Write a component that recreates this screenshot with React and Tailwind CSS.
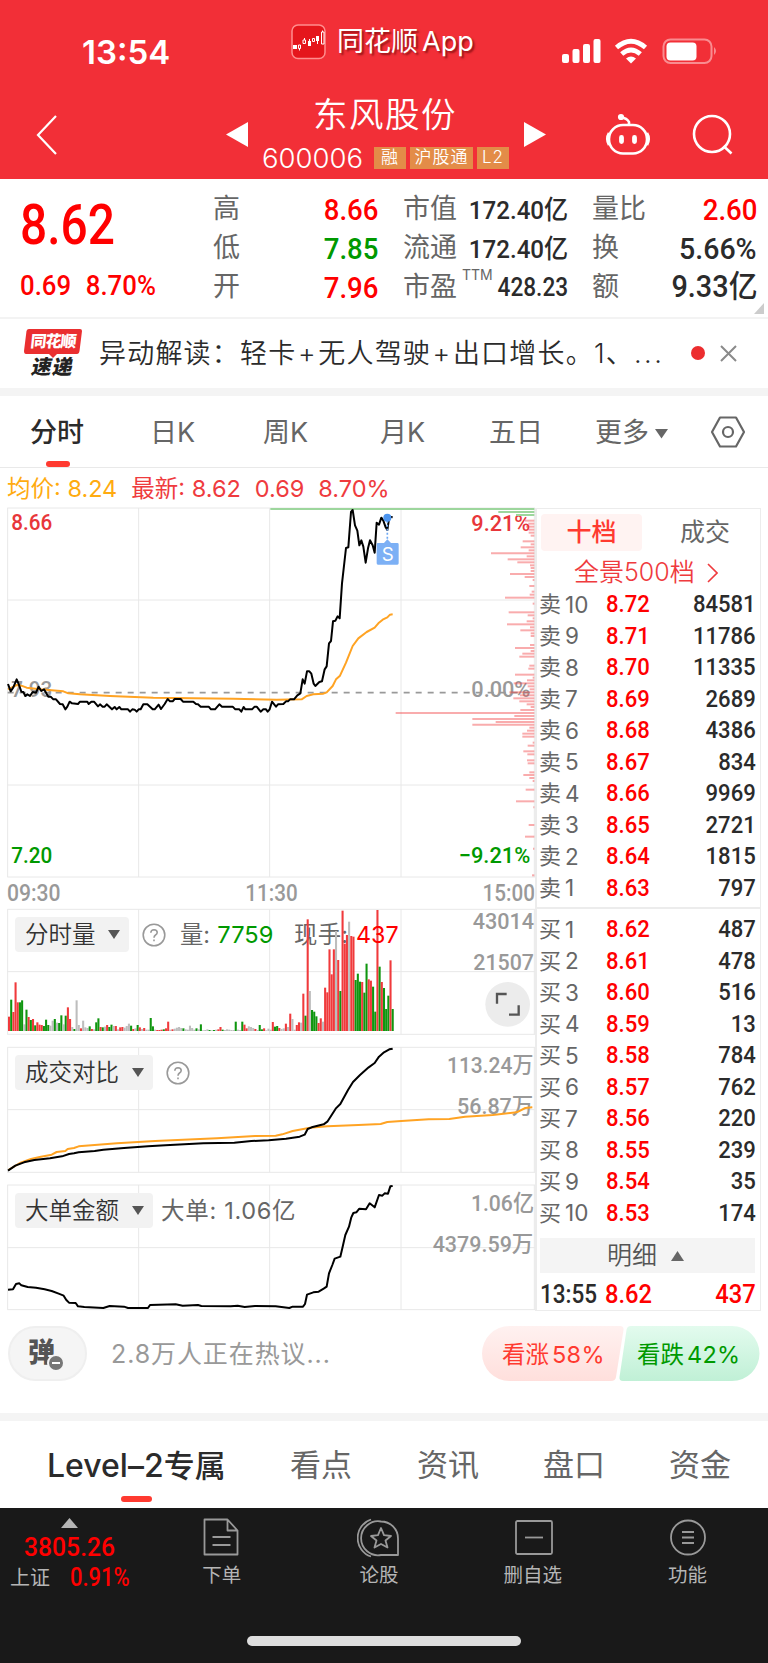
const PRICE =
  "24,552 32,574 40,562 50,538 56,552 64,575 70,576 76,588 82,583 90,588 98,576 108,578 116,560 124,573 132,568 145,590 152,590 160,598 168,598 180,612 188,613 196,628 202,620 209,605 216,610 234,612 240,605 262,605 266,612 274,605 282,605 294,619 300,613 308,620 314,620 320,613 336,628 344,621 350,628 358,621 364,628 384,628 390,635 397,628 404,629 410,635 416,628 422,628 430,613 442,613 458,628 464,628 476,614 483,627 494,612 503,597 510,604 518,604 524,597 542,597 549,605 580,605 588,612 594,613 602,620 626,620 633,628 645,628 658,613 666,620 698,620 706,628 718,628 724,635 731,621 736,628 756,628 764,620 770,620 782,635 790,628 798,628 803,635 809,628 816,605 828,620 834,613 850,612 858,604 864,604 870,598 882,598 892,586 901,580 908,538 914,551 921,514 928,514 934,521 941,551 946,558 958,546 966,544 974,508 980,499 987,430 993,423 999,364 1006,362 1013,349 1019,355 1026,250 1038,144 1045,142 1053,36 1058,30 1065,76 1072,92 1078,136 1084,121 1090,140 1097,188 1104,145 1110,121 1118,136 1124,158 1130,68 1137,74 1144,53 1150,62 1157,82 1162,90 1168,50 1178,52";

const AVERAGE =
  "24,568 36,562 50,555 64,557 80,563 120,568 190,574 205,580 240,583 330,588 460,593 700,596 830,599 905,598 920,588 940,583 970,581 980,577 998,558 1008,538 1020,527 1038,488 1058,438 1075,415 1100,396 1124,383 1135,370 1148,359 1162,352 1170,344 1178,343";

// [y, bar length], bars grow leftwards from the right edge
const PROFILE = [
  [62, 28], [71, 18], [80, 25], [89, 17], [98, 17], [107, 11], [124, 35], [133, 11], [142, 41], [151, 17],
  [160, 130], [169, 23], [178, 80], [187, 51], [196, 13], [204, 11], [213, 11], [222, 73], [231, 29], [240, 5],
  [258, 15], [275, 8], [284, 14], [293, 88], [311, 5], [337, 77], [346, 20], [355, 5], [364, 23], [373, 82],
  [382, 13], [391, 42], [400, 11], [408, 11], [435, 13], [444, 58], [453, 11], [461, 36], [470, 45], [497, 15],
  [506, 18], [524, 58], [533, 5], [541, 22], [550, 62], [559, 20], [568, 14], [577, 75], [586, 43], [595, 63],
  [604, 45], [613, 23], [621, 11], [630, 42], [639, 416], [648, 60], [657, 186], [666, 116], [674, 186],
  [683, 15], [692, 22], [701, 36], [710, 36], [728, 5], [737, 20], [754, 33], [763, 21], [781, 22], [790, 20],
  [817, 15], [825, 33], [834, 15], [843, 5], [869, 26], [904, 55], [922, 3], [975, 17], [1010, 28], [1046, 4], [1126, 7],
];

const VOLUME =
  "r43 g94 r57 r146 r86 g86 g92 s20 g64 r42 g33 r36 g17 r26 r19 r18 g15 g34 g18 s16 s31 g36 s25 g24 g47 s20 g46 r71 r36 s12 g6 s92 s18 r8 s31 s11 s9 g14 r6 s5 g26 g38 r12 g11 s13 r18 g12 g19 s15 r15 s5 r11 r12 s10 s15 s22 g16 r6 s8 g18 r11 s6 r9 s4 s4 g39 g14 s4 r3 r3 r4 g5 r8 r28 s4 r5 s7 s10 s12 s9 g8 s5 s4 s16 s9 s4 g8 s5 g20 s2 s3 s5 g3 s2 g3 s4 r5 r12 g4 s3 s5 s4 s3 s3 g28 s4 s3 g28 r19 r8 s14 s12 s9 r6 s3 g18 g5 r8 s2 s7 s4 r27 g13 g15 r9 s6 s8 r22 s12 r52 s36 s4 r18 r26 s25 r112 g46 r335 s120 g63 g58 g44 r24 r38 s28 r130 r116 r245 r170 r245 s300 r213 g120 r361 r262 r288 s328 r285 r283 g153 g172 g148 r147 g115 g202 r155 r151 g133 g58 r363 g193 r147 g129 g66 g106 r212 g66".split(" ");

const TURNOVER_AVG =
  "25,420 62,398 93,387 119,381 155,374 170,366 196,363 203,357 222,354 236,349 351,340 465,333 651,325 765,318 827,317 847,313 878,303 930,293 982,289 1075,285 1142,282 1162,276 1204,273 1286,268 1348,267 1395,260 1478,255 1550,247 1576,234 1597,232";
const TURNOVER =
  "24,422 46,407 72,397 103,390 150,385 186,379 207,372 222,370 236,367 284,363 310,359 372,354 444,349 496,346 610,340 703,338 754,333 806,331 858,326 899,320 914,314 923,297 935,292 971,283 982,275 1007,236 1021,222 1044,180 1059,156 1080,135 1106,112 1124,99 1137,80 1152,67 1168,58 1178,56";
const BIG_ORDERS =
  "24,779 39,778 48,762 58,760 64,766 83,771 108,773 134,778 155,783 176,791 191,797 199,810 207,818 227,819 234,829 253,831 310,834 329,828 372,830 384,834 444,834 450,825 527,823 548,827 594,825 604,828 692,829 713,827 734,831 765,828 827,829 868,834 878,830 909,830 915,822 921,794 940,787 956,785 971,776 980,770 987,730 997,705 1004,686 1021,680 1028,650 1036,615 1047,590 1054,562 1060,549 1069,547 1078,536 1098,538 1109,520 1124,532 1137,495 1147,497 1154,490 1164,491 1171,469 1178,468";

const SELLS = [
  [10, "8.72", 84581], [9, "8.71", 11786], [8, "8.70", 11335], [7, "8.69", 2689], [6, "8.68", 4386],
  [5, "8.67", 834], [4, "8.66", 9969], [3, "8.65", 2721], [2, "8.64", 1815], [1, "8.63", 797],
];
const BUYS = [
  [1, "8.62", 487], [2, "8.61", 478], [3, "8.60", 516], [4, "8.59", 13], [5, "8.58", 784],
  [6, "8.57", 762], [7, "8.56", 220], [8, "8.55", 239], [9, "8.54", 35], [10, "8.53", 174],
];

const COLORS = { r: "#f03a3c", g: "#0f960f", s: "#bdbdbd" };
const din = "font-['Roboto','Noto_Sans_CJK_SC',sans-serif] font-medium";

function StatusBar() {
  return (
    <div className="flex h-[88px] items-start">
      <div className="ml-[82px] mt-[34px] w-[209px] text-[33px] font-semibold leading-9">13:54</div>
      <svg className="mt-6" width="35" height="36" viewBox="0 0 35 36" fill="none" stroke="#fff">
        <rect x="1" y="1" width="33" height="33.500" rx="6" fill="#e5161c" stroke="#ff8d8d" strokeWidth="1.500" />
        <path d="M2 21h4v4H2zM17 17h3v5h-3zM25 12h3v5h-3z" fill="#fff" stroke="none" />
        <path d="M7.500 21h2v3.500h-2zM12 16h2.500v3.500H12zM21.500 14.500h2v3h-2zM30.500 8h2.500v12h-2.500zM8.500 24.500v2M13.500 14v2M18.500 15v3M26.500 17v3M31.500 6.500v1.500" strokeWidth="1" />
      </svg>
      <div className="ml-[11px] mt-[24px] w-[225px] whitespace-nowrap text-[27px] leading-9 [text-shadow:2px_2px_2px_rgba(90,0,0,.6)]">
        同花顺<span className="ml-1">App</span>
      </div>
      <svg className="mt-[38px] shrink-0" width="160" height="28" viewBox="0 0 160 28" fill="#fff">
        <rect x="0" y="16" width="7" height="9" rx="2" />
        <rect x="10.500" y="11" width="7" height="14" rx="2" />
        <rect x="21" y="6" width="7" height="19" rx="2" />
        <rect x="31.500" y="1" width="7" height="24" rx="2" />
        <g fill="none" stroke="#fff" strokeWidth="4.800">
          <path d="M54.500 9.500Q69 -3 83.500 9.500" />
          <path d="M59.700 16Q69 8 78.300 16" />
        </g>
        <path d="M64 20.500Q69 16.500 74 20.500L69 25.500Z" />
        <rect x="101.500" y="1.500" width="48" height="23.500" rx="7" fill="none" stroke="#f98c90" strokeWidth="2" />
        <rect x="104.500" y="4.500" width="30" height="18" rx="4" />
        <path d="M152 9q4 4 0 8z" fill="#f98c90" />
      </svg>
    </div>
  );
}

function TitleBar() {
  const tag = "flex h-[22px] items-center justify-center bg-[#e38c48] text-[17px] font-[350] tracking-[1px]";
  return (
    <div className="flex h-[91px] items-start">
      <svg className="ml-9 mt-[27px]" width="22" height="41" fill="none" stroke="#fff" strokeWidth="2.200">
        <path d="M20 1L2 20L20 39" />
      </svg>
      <svg className="ml-[168px] mt-[34px]" width="23" height="26" fill="#fff">
        <path d="M0 12.500L22 0V25Z" />
      </svg>
      <div className="flex w-[276px] flex-col items-center">
        <div className="h-[58px] pr-1 pt-1 text-[34.500px] font-[350] leading-[46px] tracking-[1.500px]">东风股份</div>
        <div className="flex h-6 items-center pr-[3px]">
          <span className="mr-[11px] text-[27.500px] font-[350] leading-6">600006</span>
          <div className="flex gap-1">
            <span className={`${tag} w-8`}>融</span>
            <span className={`${tag} w-[63px]`}>沪股通</span>
            <span className={`${tag} w-8`}>L2</span>
          </div>
        </div>
      </div>
      <svg className="-ml-[1px] mt-[34px]" width="23" height="26" fill="#fff">
        <path d="M0 0V25L22 12.500Z" />
      </svg>
      <svg className="ml-[57px] mt-[25px]" width="48" height="44" viewBox="0 0 48 44" fill="none" stroke="#fff" strokeWidth="2.600">
        <rect x="5" y="12" width="38" height="28.500" rx="14" />
        <path d="M25 12V9Q23 5 17 4.500M5 20Q1.500 26 5 32M43 20Q46.500 26 43 32" />
        <circle cx="17" cy="4" r="1.800" fill="#fff" />
        <path d="M17.500 24.500v4M30.500 24.500v4" strokeWidth="4.800" strokeLinecap="round" />
      </svg>
      <svg className="ml-[40px] mt-[26px]" width="42" height="42" fill="none" stroke="#fff" strokeWidth="2.600">
        <circle cx="20" cy="20" r="18" />
        <path d="M31.500 32L39.500 39.500" />
      </svg>
    </div>
  );
}

function Stat({ label, value, color = "text-[#2b2b2b]", size = "text-[30px] scale-x-[.92]", sup }) {
  return (
    <div className="flex h-[39px] items-center justify-between text-[27px] text-[#666]">
      <span className="relative">
        {label}
        {sup && <span className="absolute left-[59px] top-px text-[14px] leading-none">{sup}</span>}
      </span>
      <span className={`${din} ${color} ${size} origin-right`}>{value}</span>
    </div>
  );
}

function Quote() {
  return (
    <div className="relative flex h-[140px] border-b-2 border-[#f3f3f3] bg-white">
      <div className={`${din} w-[213px] pl-5 text-[#f00]`}>
        <div className="mt-[14px] origin-left scale-x-[.87] text-[55px] leading-[64px]">8.62</div>
        <div className="mt-[11px] flex origin-left scale-x-[.92] gap-[16px] text-[28px] leading-9">
          <span>0.69</span>
          <span>8.70%</span>
        </div>
      </div>
      <div className="w-[165px] pt-[11px]">
        <Stat label="高" value="8.66" color="text-[#f00]" />
        <Stat label="低" value="7.85" color="text-[#090]" />
        <Stat label="开" value="7.96" color="text-[#f00]" />
      </div>
      <div className="ml-[25px] w-[165px] pt-[11px]">
        <Stat label="市值" value="172.40亿" size="text-[26.500px] scale-x-[.91]" />
        <Stat label="流通" value="172.40亿" size="text-[26.500px] scale-x-[.91]" />
        <Stat label="市盈" value="428.23" size="text-[26px] scale-x-[.87]" sup="TTM" />
      </div>
      <div className="ml-6 w-[165px] pt-[11px]">
        <Stat label="量比" value="2.60" color="text-[#f00]" />
        <Stat label="换" value="5.66%" size="text-[30px] scale-x-[.95]" />
        <Stat label="额" value="9.33亿" size="text-[31px] scale-x-[.93]" />
      </div>
      <svg className="absolute bottom-[3px] right-1" width="10" height="11" fill="#ccc">
        <path d="M10 0V11H0Z" />
      </svg>
    </div>
  );
}

function News() {
  return (
    <div className="flex h-[77px] items-start border-b-8 border-[#f4f4f4] bg-white">
      <div className="relative ml-6 mt-2.5 h-[50px] w-[58px]">
        <svg className="absolute" width="58" height="30" fill="#ea2f30">
          <path d="M5 0H56Q58 0 58 2L55.500 22Q55 25 53 25H33L29 29L25 25H2Q0 25 0 22L2.500 2Q3 0 5 0Z" />
        </svg>
        <div className="relative -skew-x-6 text-center text-[16px] font-black leading-[25px] tracking-[-1px] text-white">同花顺</div>
        <div className="-skew-x-12 text-center text-[20px] font-black leading-[26px] tracking-[1px] text-[#222]">速递</div>
      </div>
      <div className="ml-[17px] mt-[16px] w-[592px] whitespace-nowrap text-[27px] font-[350] leading-[38px] tracking-[1.200px] text-[#2b2b2b]">
        异动解读：轻卡<span className="mx-[1.500px]">+</span>无人驾驶<span className="mx-[1.500px]">+</span>出口增长。1、<span className="tracking-[2.500px]">...</span>
      </div>
      <div className="mt-[27px] h-3.5 w-3.5 rounded-full bg-[#ec2d2f]" />
      <svg className="ml-[15px] mt-[26px]" width="17" height="17" stroke="#8a8a8a" strokeWidth="2">
        <path d="M1 1L16 16M16 1L1 16" />
      </svg>
    </div>
  );
}

function PeriodTabs() {
  return (
    <div className="flex h-[72px] items-center border-b border-[#e9e9e9] bg-white pt-1 text-[27px] text-[#666]">
      <div className="relative ml-[30px] w-[120px] font-medium text-[#2b2b2b]">
        分时
        <div className="absolute -bottom-[13.5px] left-[16px] h-1.5 w-[24px] rounded-full bg-[#ff3a30]" />
      </div>
      <div className="w-[113px]">日K</div>
      <div className="w-[117px]">周K</div>
      <div className="w-[109px]">月K</div>
      <div className="w-[106px]">五日</div>
      <div className="flex w-[115px] items-center gap-[6px]">
        更多
        <svg width="13" height="10" fill="#666"><path d="M0 0H13L6.500 9.500Z" /></svg>
      </div>
      <svg className="-mt-1" width="36" height="32" fill="none" stroke="#666" strokeWidth="2.200">
        <path d="M10 1.500H26L34 16L26 30.500H10L2 16Z" strokeLinejoin="round" />
        <circle cx="18" cy="16" r="5" />
      </svg>
    </div>
  );
}

function Grid({ ys, bottom }) {
  return (
    <g stroke="#e8e8e8" strokeWidth="3">
      {ys.map((y) => <path key={y} d={`M22 ${y}H1605`} />)}
      {[23, 416, 809, 1203, 1603].map((x) => <path key={x} d={`M${x} ${ys[0]}V${bottom}`} />)}
    </g>
  );
}

function Label({ x, end, y, fill = "#999", size = 67, children }) {
  return (
    <text x={x} y={y} fill={fill} fontSize={size} textLength={end - x} lengthAdjust="spacingAndGlyphs" className={din}>
      {children}
    </text>
  );
}

function PriceChart() {
  return (
    <svg className="block overflow-visible" width="528" height="371" viewBox="21 21 1584 1113" fill="none">
      <Grid ys={[24, 300, 855, 1131]} bottom={1131} />
      <path d="M23 578H1603" stroke="#999" strokeWidth="5" strokeDasharray="18 18" />
      <Label x={34} end={157} y={590}>7.93</Label>
      <Label x={1414} end={1591} y={92} fill="#e8363a">9.21%</Label>
      <Label x={1414} end={1591} y={590}>0.00%</Label>
      <Label x={1376} end={1591} y={1089} fill="#090">−9.21%</Label>
      <g stroke="#f03a3c" strokeOpacity=".42" strokeWidth="6">
        {PROFILE.map(([y, len]) => <path key={y} d={`M1603 ${y}h-${len}`} />)}
      </g>
      <path d="M811 27H1603M1495 36H1603M1548 45H1603" stroke="#9dd69d" strokeWidth="6" />
      <polyline points={AVERAGE} stroke="#ffa323" strokeWidth="6" strokeLinejoin="round" />
      <polyline points={PRICE} stroke="#000" strokeWidth="6" strokeLinejoin="round" />
      <path d="M1162 62V120" stroke="#6ea8f3" strokeWidth="5" strokeDasharray="6 6" />
      <circle cx="1162" cy="53" r="12" fill="#4c94ee" />
      <path d="M1134 129H1152L1162 118L1173 129H1192Q1196 129 1196 133V190Q1196 194 1192 194H1134Q1130 194 1130 190V133Q1130 129 1134 129Z" fill="#7cb0f5" />
      <text x="1163" y="182" textAnchor="middle" fill="#fff" fontSize="56">S</text>
      <Label x={34} end={157} y={91} fill="#e8363a">8.66</Label>
      <Label x={34} end={157} y={1088} fill="#090">7.20</Label>
    </svg>
  );
}

function Picker({ children, wide }) {
  return (
    <div className={`flex h-[35px] shrink-0 items-center justify-between whitespace-nowrap rounded bg-[#f2f2f2] pl-2.5 pr-[9px] text-[23.500px] font-[350] text-[#333] ${wide ? "w-[138px]" : "w-[114px]"}`}>
      {children}
      <svg className="shrink-0" width="12" height="9" fill="#555"><path d="M0 0H12L6 9Z" /></svg>
    </div>
  );
}

function Help({ className }) {
  return (
    <svg className={className} width="24" height="24" fill="none" stroke="#999" strokeWidth="1.600">
      <circle cx="12" cy="12" r="10.800" />
      <path d="M8.800 9.800Q9 6.700 12 6.700Q15.200 6.800 15.200 9.500Q15.200 11 13.500 12Q12 13 12 14.700M12 16.500V18.300" />
    </svg>
  );
}

function VolumeChart() {
  return (
    <div className="relative h-[127px]">
      <div className="absolute left-2 top-[9px] flex items-center">
        <Picker>分时量</Picker>
        <Help className="ml-[13px]" />
      </div>
      <svg className="relative block overflow-visible" width="528" height="127" viewBox="21 54 1584 381" fill="none">
        <Grid ys={[58, 245, 433]} bottom={433} />
        <g className="font-normal" fontSize="70" fill="#666">
          <text x="540" y="160" textLength="90">量:</text>
          <text x="882" y="160" textLength="162">现手:</text>
        </g>
        {VOLUME.map((bar, i) => {
          const h = Number(bar.slice(1));
          return <rect key={i} x={24 + i * 6.54} y={423 - h} width="6.2" height={h} fill={COLORS[bar[0]]} />;
        })}
        <g fontSize="70">
          <text x="652" y="158" fill="#090" textLength="168" lengthAdjust="spacingAndGlyphs">7759</text>
          <text x="1068" y="158" fill="#f00" textLength="128" lengthAdjust="spacingAndGlyphs">437</text>
        </g>
        <Label x={1418} end={1602} y={116}>43014</Label>
        <Label x={1420} end={1602} y={240}>21507</Label>
        <circle cx="1523" cy="343" r="67" fill="#ececec" />
        <path d="M1491 341V312H1520M1527 374H1556V346" stroke="#555" strokeWidth="7" />
      </svg>
    </div>
  );
}

function TurnoverChart() {
  return (
    <div className="relative mt-[11px] h-[127px]">
      <svg className="block overflow-visible" width="528" height="127" viewBox="21 48 1584 381" fill="none">
        <Grid ys={[52, 239, 427]} bottom={427} />
        <Label x={1341} end={1600} y={128}>113.24万</Label>
        <Label x={1371} end={1600} y={252}>56.87万</Label>
        <polyline points={TURNOVER_AVG} stroke="#ffa323" strokeWidth="6" strokeLinejoin="round" />
        <polyline points={TURNOVER} stroke="#000" strokeWidth="6" strokeLinejoin="round" />
      </svg>
      <div className="absolute left-2 top-[9px] flex items-center">
        <Picker wide>成交对比</Picker>
        <Help className="ml-[13px]" />
      </div>
    </div>
  );
}

function BigOrderChart() {
  return (
    <div className="relative mt-[11px] h-[127px]">
      <svg className="block overflow-visible" width="528" height="127" viewBox="21 462 1584 381" fill="none">
        <Grid ys={[465, 653, 839]} bottom={839} />
        <Label x={1413} end={1602} y={542}>1.06亿</Label>
        <Label x={1298} end={1600} y={666}>4379.59万</Label>
        <polyline points={BIG_ORDERS} stroke="#000" strokeWidth="6" strokeLinejoin="round" />
      </svg>
      <div className="absolute left-2 top-[9px] flex items-center">
        <Picker wide>大单金额</Picker>
        <span className="ml-2 whitespace-nowrap text-[23.500px] tracking-[.700px] text-[#666]">大单: 1.06亿</span>
      </div>
    </div>
  );
}

function BookRow({ side, level, price, amount }) {
  return (
    <div className="flex h-[31.5px] items-center pl-0.5 text-[22.500px]">
      <span className="w-[26px] text-[22px] text-[#666]">{side}</span>
      <span className="w-[41px] text-[#666]">{level}</span>
      <span className={`${din} origin-left scale-x-[.9] text-[24.500px] text-[#f00]`}>{price}</span>
      <span className={`${din} ml-auto origin-right scale-x-[.9] text-[24.500px] text-[#2b2b2b]`}>{amount}</span>
    </div>
  );
}

function OrderBook() {
  return (
    <div className="mt-px h-[803px] w-[226px] border border-l-2 border-[#ececec] pr-1">
      <div className="ml-1 mt-[5px] flex h-[37px] text-[25px]">
        <div className="flex w-[101px] items-center justify-center rounded bg-[#fff3f2] font-medium text-[#ff3a30]">十档</div>
        <div className="flex flex-1 items-center justify-center pl-3 text-[#666]">成交</div>
      </div>
      <div className="ml-1 flex h-[38px] items-center pl-[33px] pt-[5px] text-[25px] font-[350] text-[#ef3b3e]">
        全景<span>500</span>档
        <svg className="ml-3" width="11" height="20" fill="none" stroke="#ef3b3e" strokeWidth="1.600"><path d="M1 1L10 10L1 19" /></svg>
      </div>
      {SELLS.map(([level, price, amount]) => (
        <BookRow key={level} side="卖" level={level} price={price} amount={amount} />
      ))}
      <div className="-mr-1 mb-[5px] mt-[3px] border-b-2 border-[#ececec]" />
      {BUYS.map(([level, price, amount]) => (
        <BookRow key={level} side="买" level={level} price={price} amount={amount} />
      ))}
      <div className="ml-[3px] mr-px mt-[9px] flex h-[35px] items-center justify-center gap-3.5 bg-[#f4f4f4] pr-1 text-[25px] font-[350] text-[#555]">
        明细
        <svg width="13" height="10" fill="#666"><path d="M0 10H13L6.500 0Z" /></svg>
      </div>
      <div className={`${din} flex h-11 items-center pl-[3px] text-[25px]`}>
        <span className="w-[65px] origin-left scale-x-[.9] text-[#2b2b2b]">13:55</span>
        <span className="origin-left scale-x-[.95] text-[#f00]">8.62</span>
        <span className="ml-auto origin-right scale-x-[.95] text-[#f00]">437</span>
      </div>
    </div>
  );
}

function Discussion() {
  return (
    <div className="flex h-[110px] items-start border-b-8 border-[#f4f4f4] pl-2 pr-2 pt-[15px]">
      <div className="relative h-[55px] w-[79px] rounded-full border-2 border-[#efefef] bg-[#f5f5f5] pl-[18px] pt-[7px] text-[27px] font-black leading-9 text-[#555]">
        弹
        <svg className="absolute left-[37px] top-[26px]" width="18" height="18">
          <circle cx="9" cy="9" r="8" fill="#777" stroke="#f5f5f5" strokeWidth="2" />
          <path d="M5 9H13" stroke="#fff" strokeWidth="2" />
        </svg>
      </div>
      <div className="ml-6 mt-[10px] flex-1 whitespace-nowrap text-[25px] leading-9 tracking-[.900px] text-[#999]">
        2.8万人正在热议...
      </div>
      <div className="relative flex h-[55px] w-[278px] items-center text-[23.500px]">
        <svg className="absolute" width="278" height="55">
          <defs>
            <linearGradient id="up" x2="0" y2="1"><stop stopColor="#fff1f0" /><stop offset="1" stopColor="#ffdfdc" /></linearGradient>
            <linearGradient id="down" x2="0" y2="1"><stop stopColor="#e3fbee" /><stop offset="1" stopColor="#c0f0d6" /></linearGradient>
          </defs>
          <path d="M27.500 0H138Q142 0 141.500 4L134 51Q133.500 55 129 55H27.500A27.500 27.500 0 0 1 27.500 0Z" fill="url(#up)" />
          <path d="M149 0H250A27.500 27.500 0 0 1 250 55H141Q137 55 137.500 51L144.500 4Q145 0 149 0Z" fill="url(#down)" />
        </svg>
        <span className="relative ml-5 w-[135px] pt-0.5 text-[#ff3a30]">看涨<span className="ml-[3px] tracking-[.300px]">58%</span></span>
        <span className="relative pt-0.5 text-[#090]">看跌<span className="ml-[3px] tracking-[.300px]">42%</span></span>
      </div>
    </div>
  );
}

function SectionTabs() {
  return (
    <div className="flex h-[87px] items-center pt-0.5 text-[31px] text-[#666]">
      <div className="relative ml-[47px] w-[243px] whitespace-nowrap font-medium text-[#2b2b2b]">
        <span className="text-[32px]">Level–2</span><span className="text-[31px]">专属</span>
        <div className="absolute -bottom-[12px] left-[74px] h-1.5 w-[31px] rounded-full bg-[#ff3a30]" />
      </div>
      <div className="w-[127px]">看点</div>
      <div className="w-[126px]">资讯</div>
      <div className="w-[126px]">盘口</div>
      <div>资金</div>
    </div>
  );
}

function NavItem({ label, width, children }) {
  return (
    <div className={`flex flex-col items-center ${width}`}>
      <svg width="44" height="40" viewBox="0 0 44 40" fill="none" stroke="#999" strokeWidth="1.800" strokeLinejoin="round">
        {children}
      </svg>
      <span className="mt-[3px] text-[19.500px] leading-7">{label}</span>
    </div>
  );
}

function BottomBar() {
  return (
    <div className="h-[155px] bg-[#191919] text-[#b5b5b5]">
      <div className="flex h-[128px] pt-[10px]">
        <div className="w-[144px] pl-2.5">
          <svg className="ml-[51px] block" width="17" height="10" fill="#b5b5b5"><path d="M0 10H17L8.500 0Z" /></svg>
          <div className={`${din} ml-[14px] mt-1 origin-left scale-x-[.95] text-[26px] leading-[30px] text-[#f00]`}>3805.26</div>
          <div className="flex items-center text-[20px] leading-8">
            <span className="w-[60px]">上证</span>
            <span className={`${din} origin-left scale-x-[.88] text-[25px] text-[#f00]`}>0.91%</span>
          </div>
        </div>
        <NavItem label="下单" width="w-[156px]">
          <path d="M4.500 1.500H27.500L37.500 12.500V36.500H4.500ZM27.500 1.500V12.500H37.500M12.500 19H30.500M12.500 27H30.500" />
        </NavItem>
        <NavItem label="论股" width="w-[159px]">
          <path d="M24 3.500A17 17 0 1 0 24 37H41V20.500A17 17 0 0 0 24 3.500Z" />
          <path d="M14 1.500A19.500 19.500 0 0 0 14 38.500" />
          <path d="M24 10L27 17.200L34 18L28.500 22.500L30.500 29.500L24 26L17.500 29.500L19.500 22.500L14 18L21 17.200Z" />
        </NavItem>
        <NavItem label="删自选" width="w-[149px]">
          <rect x="5" y="3" width="36" height="33" rx="1.500" />
          <path d="M14 19.500H32" />
        </NavItem>
        <NavItem label="功能" width="w-[161px]">
          <circle cx="22" cy="19.500" r="17" />
          <path d="M16 14H28M16 19.500H28M16 25H28" />
        </NavItem>
      </div>
      <div className="mx-auto h-2.5 w-[274px] rounded-full bg-[#dedede]" />
    </div>
  );
}

export default function App() {
  return (
    <div className="w-[768px] overflow-hidden bg-white font-['Inter','Noto_Sans_CJK_SC',sans-serif]">
      <div className="h-[179px] bg-[#f22f37] text-white">
        <StatusBar />
        <TitleBar />
      </div>
      <Quote />
      <News />
      <PeriodTabs />
      <div className="flex h-[39px] items-center gap-[14px] whitespace-nowrap pl-[7px] pt-0.5 text-[23.500px] text-[#ef3b3e]">
        <span className="text-[#ffab10]">均价: 8.24</span>
        <span>最新: 8.62</span>
        <span>0.69</span>
        <span>8.70%</span>
      </div>
      <div className="flex h-[804px] pl-[7px]">
        <div className="w-[528px]">
          <PriceChart />
          <div className={`${din} flex h-[30px] items-center justify-between text-[24px] text-[#999]`}>
            <span className="origin-left scale-x-[.88]">09:30</span>
            <span className="scale-x-[.86]">11:30</span>
            <span className="origin-right scale-x-[.86]">15:00</span>
          </div>
          <VolumeChart />
          <TurnoverChart />
          <BigOrderChart />
        </div>
        <OrderBook />
      </div>
      <Discussion />
      <SectionTabs />
      <BottomBar />
    </div>
  );
}
